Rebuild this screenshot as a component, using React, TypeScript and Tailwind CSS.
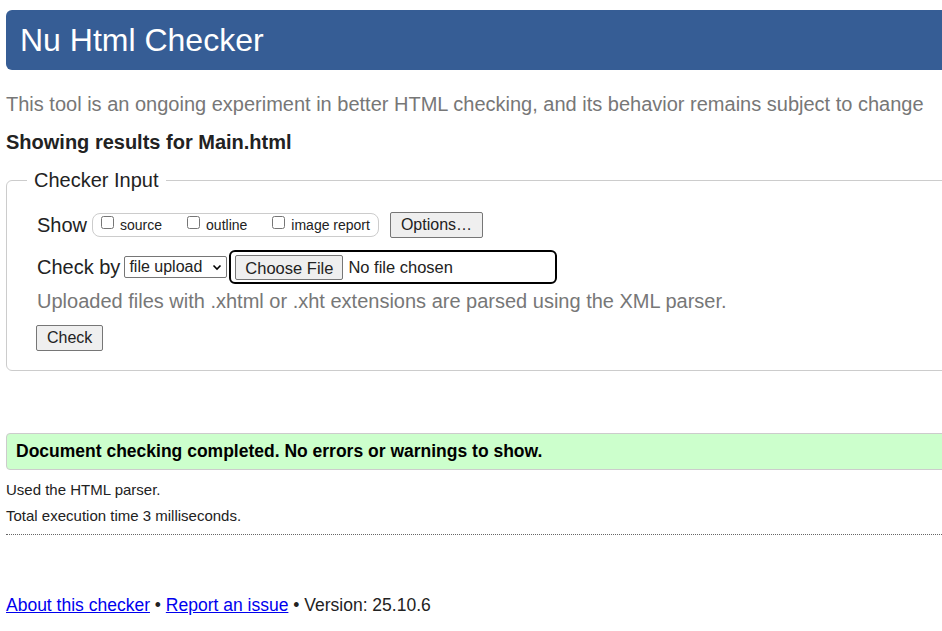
import React from 'react';

export default function App() {
  return (
    <div className="w-[942px] h-[631px] overflow-hidden bg-white text-[#222] font-['Liberation_Sans',Arial,sans-serif]">
      {/* Header */}
      <div className="ml-[6px] mt-[10px] w-[960px] h-[60px] bg-[#365d95] rounded-[6px] flex items-center pl-[14px]">
        <h1 className="text-white text-[32px] leading-none">Nu Html Checker</h1>
      </div>

      <p className="ml-[6px] mt-[22px] text-[20px] leading-[24px] text-[#777] whitespace-nowrap">
        This tool is an ongoing experiment in better HTML checking, and its behavior remains subject to change
      </p>

      <h2 className="ml-[6px] mt-[14px] text-[20px] leading-[24px] font-bold whitespace-nowrap">
        Showing results for Main.html
      </h2>

      {/* Checker input */}
      <fieldset className="ml-[6px] mt-[14px] w-[960px] border border-[#ccc] rounded-[6px]">
        <legend className="ml-[20px] px-[7px] text-[20px] leading-[24px]">Checker Input</legend>

        <div className="pl-[30px] pt-[19px] pb-[19px]">
          <div className="flex items-center h-[28px]">
            <span className="text-[20px] mr-[5px]">Show</span>
            <div className="flex items-center h-[24px] border border-[#ccc] rounded-[8px] px-[8px] text-[14px]">
              <label className="flex items-center mr-[25px]">
                <input type="checkbox" className="w-[13px] h-[13px] mr-[6px] mt-[-5px]" />
                source
              </label>
              <label className="flex items-center mr-[25px]">
                <input type="checkbox" className="w-[13px] h-[13px] mr-[6px] mt-[-5px]" />
                outline
              </label>
              <label className="flex items-center">
                <input type="checkbox" className="w-[13px] h-[13px] mr-[6px] mt-[-5px]" />
                image report
              </label>
            </div>
            <button className="ml-[11px] h-[26px] px-[10px] text-[16px] bg-[#efefef] border border-[#767676] rounded-[2px]">
              Options…
            </button>
          </div>

          <div className="flex items-center mt-[11px]">
            <span className="text-[20px] mr-[4px]">Check by</span>
            <div className="w-[103px] h-[22px] border border-[#767676] rounded-[2px] flex items-center justify-between px-[4px] text-[16px] bg-white">
              file upload
              <svg width="10" height="10" viewBox="0 0 10 10">
                <path d="M1.5 3.5 L5 7 L8.5 3.5" stroke="#000" strokeWidth="1.6" fill="none" />
              </svg>
            </div>
            <div className="ml-[2px] w-[328px] h-[34px] border-2 border-black rounded-[6px] flex items-center pl-[4px]">
              <button className="w-[108px] h-[25px] text-[16.5px] bg-[#efefef] border border-[#767676] rounded-[2px]">
                Choose File
              </button>
              <span className="ml-[5px] text-[16.5px]">No file chosen</span>
            </div>
          </div>

          <p className="mt-[5px] text-[20px] leading-[24px] text-[#777] whitespace-nowrap">
            Uploaded files with .xhtml or .xht extensions are parsed using the XML parser.
          </p>

          <button className="mt-[12px] h-[26px] px-[10px] text-[16px] bg-[#efefef] border border-[#767676] rounded-[2px] -ml-[1px]">
            Check
          </button>
        </div>
      </fieldset>

      {/* Result */}
      <div className="ml-[6px] mt-[62px] w-[960px] h-[37px] bg-[#ccffcc] border border-[#ccc] rounded-[4px] flex items-center pl-[9px]">
        <p className="text-[17.5px] font-bold text-black">Document checking completed. No errors or warnings to show.</p>
      </div>

      <p className="ml-[6px] mt-[11px] text-[15px] leading-[18px]">Used the HTML parser.</p>
      <p className="ml-[6px] mt-[8px] text-[15px] leading-[18px]">Total execution time 3 milliseconds.</p>

      <hr className="ml-[6px] mt-[9px] border-0 border-t border-dotted border-[#666]" />

      <p className="ml-[6px] mt-[59px] text-[17.5px] leading-[22px]">
        <a href="#" className="text-[#0000ee] underline">About this checker</a>
        {' • '}
        <a href="#" className="text-[#0000ee] underline">Report an issue</a>
        {' • Version: 25.10.6'}
      </p>
    </div>
  );
}
